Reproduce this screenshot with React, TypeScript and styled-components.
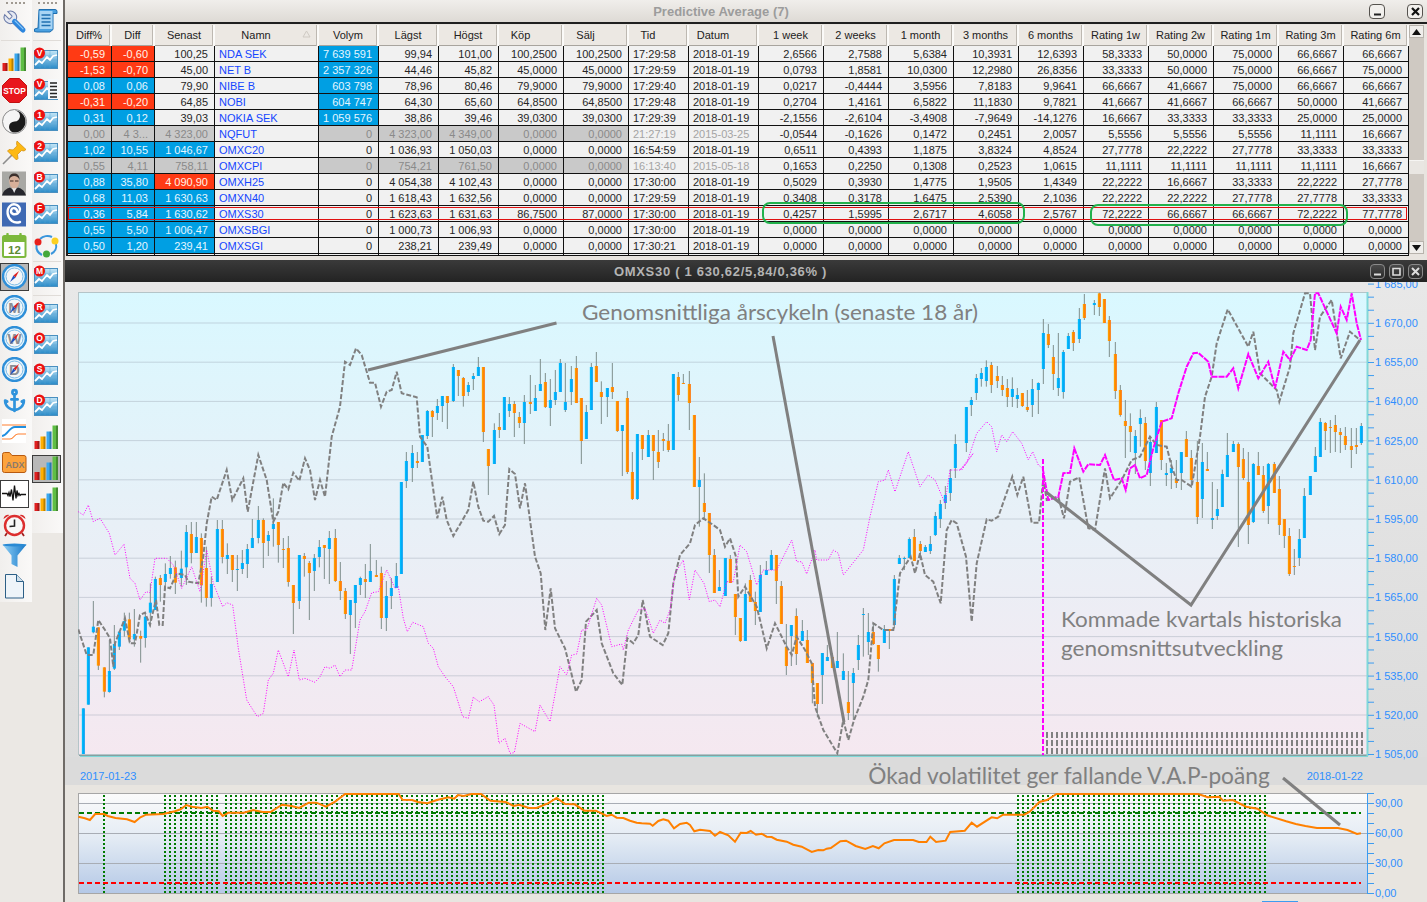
import type { ReactNode } from 'react';
import styled, { createGlobalStyle } from 'styled-components';
import { Anchor } from 'lucide-react';

const GlobalStyle = createGlobalStyle`
  html, body {
    margin: 0;
    padding: 0;
    height: 100%;
    overflow: hidden;
    background: #e8e4df;
    font-family: "Liberation Sans", Arial, sans-serif;
  }
`;

/* ---------- table data ---------- */

type Tone = 'red' | 'blue' | 'gray' | undefined;

interface Quote {
  name: string;
  pct: string;
  diff: string;
  last: string;
  lastTone?: Tone;
  vol: string;
  volTone?: Tone;
  low: string;
  high: string;
  bid: string;
  ask: string;
  time: string;
  date: string;
  stats: string[];
  dim?: boolean;
  selected?: boolean;
}

const DAY = '2018-01-19';
const ZEROS = Array(10).fill('0,0000');

const QUOTES: Quote[] = [
  { name: 'NDA SEK', pct: '-0,59', diff: '-0,60', last: '100,25', vol: '7 639 591', volTone: 'blue', low: '99,94', high: '101,00', bid: '100,2500', ask: '100,2500', time: '17:29:58', date: DAY, stats: ['2,6566', '2,7588', '5,6384', '10,3931', '12,6393', '58,3333', '50,0000', '75,0000', '66,6667', '66,6667'] },
  { name: 'NET B', pct: '-1,53', diff: '-0,70', last: '45,00', vol: '2 357 326', volTone: 'blue', low: '44,46', high: '45,82', bid: '45,0000', ask: '45,0000', time: '17:29:59', date: DAY, stats: ['0,0793', '1,8581', '10,0300', '12,2980', '26,8356', '33,3333', '50,0000', '75,0000', '66,6667', '75,0000'] },
  { name: 'NIBE B', pct: '0,08', diff: '0,06', last: '79,90', vol: '603 798', volTone: 'blue', low: '78,96', high: '80,46', bid: '79,9000', ask: '79,9000', time: '17:29:40', date: DAY, stats: ['0,0217', '-0,4444', '3,5956', '7,8183', '9,9641', '66,6667', '41,6667', '75,0000', '66,6667', '66,6667'] },
  { name: 'NOBI', pct: '-0,31', diff: '-0,20', last: '64,85', vol: '604 747', volTone: 'blue', low: '64,30', high: '65,60', bid: '64,8500', ask: '64,8500', time: '17:29:48', date: DAY, stats: ['0,2704', '1,4161', '6,5822', '11,1830', '9,7821', '41,6667', '41,6667', '66,6667', '50,0000', '41,6667'] },
  { name: 'NOKIA SEK', pct: '0,31', diff: '0,12', last: '39,03', vol: '1 059 576', volTone: 'blue', low: '38,86', high: '39,46', bid: '39,0300', ask: '39,0300', time: '17:29:39', date: DAY, stats: ['-2,1556', '-2,6104', '-3,4908', '-7,9649', '-14,1276', '16,6667', '33,3333', '33,3333', '25,0000', '25,0000'] },
  { name: 'NQFUT', pct: '0,00', diff: '4 3...', last: '4 323,00', vol: '0', low: '4 323,00', high: '4 349,00', bid: '0,0000', ask: '0,0000', time: '21:27:19', date: '2015-03-25', dim: true, stats: ['-0,0544', '-0,1626', '0,1472', '0,2451', '2,0057', '5,5556', '5,5556', '5,5556', '11,1111', '16,6667'] },
  { name: 'OMXC20', pct: '1,02', diff: '10,55', last: '1 046,67', lastTone: 'blue', vol: '0', low: '1 036,93', high: '1 050,03', bid: '0,0000', ask: '0,0000', time: '16:54:59', date: DAY, stats: ['0,6511', '0,4393', '1,1875', '3,8324', '4,8524', '27,7778', '22,2222', '27,7778', '33,3333', '33,3333'] },
  { name: 'OMXCPI', pct: '0,55', diff: '4,11', last: '758,11', vol: '0', low: '754,21', high: '761,50', bid: '0,0000', ask: '0,0000', time: '16:13:40', date: '2015-05-18', dim: true, stats: ['0,1653', '0,2250', '0,1308', '0,2523', '1,0615', '11,1111', '11,1111', '11,1111', '11,1111', '16,6667'] },
  { name: 'OMXH25', pct: '0,88', diff: '35,80', last: '4 090,90', lastTone: 'red', vol: '0', low: '4 054,38', high: '4 102,43', bid: '0,0000', ask: '0,0000', time: '17:30:00', date: DAY, stats: ['0,5029', '0,3930', '1,4775', '1,9505', '1,4349', '22,2222', '16,6667', '33,3333', '22,2222', '27,7778'] },
  { name: 'OMXN40', pct: '0,68', diff: '11,03', last: '1 630,63', lastTone: 'blue', vol: '0', low: '1 618,43', high: '1 632,56', bid: '0,0000', ask: '0,0000', time: '17:29:59', date: DAY, stats: ['0,3408', '0,3178', '1,6475', '2,5390', '2,1036', '22,2222', '22,2222', '27,7778', '27,7778', '33,3333'] },
  { name: 'OMXS30', pct: '0,36', diff: '5,84', last: '1 630,62', lastTone: 'blue', vol: '0', low: '1 623,63', high: '1 631,63', bid: '86,7500', ask: '87,0000', time: '17:30:00', date: DAY, selected: true, stats: ['0,4257', '1,5995', '2,6717', '4,6058', '2,5767', '72,2222', '66,6667', '66,6667', '72,2222', '77,7778'] },
  { name: 'OMXSBGI', pct: '0,55', diff: '5,50', last: '1 006,47', lastTone: 'blue', vol: '0', low: '1 000,73', high: '1 006,93', bid: '0,0000', ask: '0,0000', time: '17:30:00', date: DAY, stats: ZEROS },
  { name: 'OMXSGI', pct: '0,50', diff: '1,20', last: '239,41', lastTone: 'blue', vol: '0', low: '238,21', high: '239,49', bid: '0,0000', ask: '0,0000', time: '17:30:21', date: DAY, stats: ZEROS },
];

const HEADERS: [string, boolean][] = [
  ['Diff%', false], ['Diff', false], ['Senast', false], ['Namn', true], ['Volym', false], ['Lägst', false], ['Högst', false],
  ['Köp', true], ['Sälj', true], ['Tid', true], ['Datum', true], ['1 week', false], ['2 weeks', false], ['1 month', false],
  ['3 months', false], ['6 months', false], ['Rating 1w', false], ['Rating 2w', false], ['Rating 1m', false], ['Rating 3m', false], ['Rating 6m', false],
];

const COLUMNS = '44px 43px 60px 104px 60px 60px 60px 65px 65px 60px 70px repeat(10, 65px)';

/* ---------- page skeleton ---------- */

const Page = styled.div`
  display: flex;
  width: 1427px;
  height: 902px;
  overflow: hidden;
`;

const Sidebar = styled.aside`
  display: flex;
  align-items: flex-start;
  flex: 0 0 65px;
  box-sizing: border-box;
  height: 902px;
  background: #ebe8e4;
  border-right: 2px solid #6f6b67;
`;

const ToolColumn = styled.div<{ $height: number }>`
  position: relative;
  box-sizing: border-box;
  width: 31.5px;
  height: ${(p) => p.$height}px;
  padding-top: 6px;
  background: linear-gradient(90deg, #f1efed, #faf9f8);
  &::before {
    content: '';
    position: absolute;
    top: 2px;
    left: 6px;
    width: 19px;
    border-top: 2px dotted #a09a92;
  }
`;

const ToolButton = styled.div`
  display: flex;
  align-items: center;
  justify-content: center;
  width: 29px;
  height: 31px;
`;

const IconWell = styled.div<{ $active?: string }>`
  display: flex;
  align-items: center;
  justify-content: center;
  box-sizing: border-box;
  width: 29px;
  height: 28px;
  ${(p) => p.$active && `border: 1px solid #3c3c3c; background: ${p.$active};`}
`;

const ToolSep = styled.div<{ $gap: number }>`
  height: 1px;
  margin: ${(p) => p.$gap}px 2px ${(p) => p.$gap}px 1px;
  background: #e0dcd8;
`;

const Main = styled.main`
  display: flex;
  flex-direction: column;
  flex: 1;
  min-width: 0;
`;

const TitleBar = styled.header`
  display: flex;
  align-items: center;
  height: 22px;
  background: linear-gradient(#f0eeeb, #dedad5);
`;

const WindowTitle = styled.div<{ $dark?: boolean }>`
  flex: 1;
  padding: 1px 0 0 ${(p) => (p.$dark ? 6 : 8)}px;
  text-align: center;
  font-size: 13px;
  font-weight: bold;
  letter-spacing: ${(p) => (p.$dark ? 0.7 : 0)}px;
  color: ${(p) => (p.$dark ? '#b4b4b4' : '#9c9c9c')};
`;

const WindowControls = styled.div`
  display: flex;
  gap: 4px;
  padding-right: 4px;
`;

const LightButton = styled.div`
  display: flex;
  align-items: center;
  justify-content: center;
  box-sizing: border-box;
  width: 16px;
  height: 15px;
  margin-left: 18px;
  border: 1px solid #55524e;
  border-radius: 4px;
  background: #f2f0ed;
  &:first-child {
    margin-left: 0;
  }
`;

const DarkButton = styled.div`
  display: flex;
  align-items: center;
  justify-content: center;
  box-sizing: border-box;
  width: 15px;
  height: 15px;
  border: 1px solid #8a8a8a;
  border-radius: 4px;
  background: linear-gradient(#4a4a4a, #2a2a2a);
`;

const TableFrame = styled.section`
  display: flex;
  height: 231px;
  margin-left: 1px;
  padding-top: 1px;
  padding-right: 3px;
  background: #e8e4df;
  border-top: 2px solid #1f1f1f;
  border-left: 2px solid #1f1f1f;
`;

const Rows = styled.div`
  position: relative;
  width: 1341px;
`;

const HeaderRow = styled.div`
  display: grid;
  grid-template-columns: ${COLUMNS};
  height: 21px;
  box-sizing: border-box;
  background: #ece8e3;
  border-bottom: 1px solid #a8a49e;
`;

const HeaderCell = styled.div<{ $off?: boolean }>`
  position: relative;
  padding-right: ${(p) => (p.$off ? 20 : 0)}px;
  border-right: 2px solid #fbfaf8;
  box-shadow: inset -1px 0 0 #bdb8b1;
  text-align: center;
  font-size: 11px;
  line-height: 21px;
  color: #222;
`;

const SortMark = styled.svg`
  position: absolute;
  top: 5px;
  right: 6px;
`;

const DataRow = styled.div<{ $selected?: boolean }>`
  position: relative;
  display: grid;
  grid-template-columns: ${COLUMNS};
  height: 16px;
  ${(p) =>
    p.$selected &&
    `&::after {
      content: '';
      position: absolute;
      top: 1px;
      left: 0;
      right: 2px;
      bottom: 2px;
      border: 1px solid #e01010;
      pointer-events: none;
    }`}
`;

const StubRow = styled(DataRow)`
  height: 2px;
`;

const TONES = {
  red: ['#ff3a14', '#fff3e8'],
  blue: ['#009fe3', '#e4f6ff'],
  gray: ['#c9c9c9', '#8a8a8a'],
};

const Cell = styled.div<{ $tone?: Tone; $left?: boolean; $link?: boolean; $faint?: boolean }>`
  box-sizing: border-box;
  overflow: hidden;
  padding: 0 ${(p) => (p.$left ? 0 : 6)}px 0 ${(p) => (p.$left ? 4 : 0)}px;
  background: ${(p) => (p.$tone ? TONES[p.$tone][0] : '#f1f1f1')};
  border-right: 1px solid #111;
  border-bottom: 1px solid #111;
  text-align: ${(p) => (p.$left ? 'left' : 'right')};
  white-space: nowrap;
  font-size: 11px;
  line-height: 17px;
  color: ${(p) => {
    if (p.$tone) return TONES[p.$tone][1];
    if (p.$link) return '#1446ff';
    return p.$faint ? '#a4a4a4' : '#262626';
  }};
`;

const Ring = styled.div<{ $left: number; $top: number; $width: number }>`
  position: absolute;
  left: ${(p) => p.$left}px;
  top: ${(p) => p.$top}px;
  width: ${(p) => p.$width}px;
  height: 22px;
  box-sizing: border-box;
  border: 2px solid #22b14c;
  border-radius: 8px;
  pointer-events: none;
`;

const ScrollBar = styled.div`
  display: flex;
  flex-direction: column;
  width: 15px;
  height: 229px;
  background: #cfc9c2;
`;

const ScrollArrow = styled.div`
  display: flex;
  align-items: center;
  justify-content: center;
  box-sizing: border-box;
  height: 13px;
  background: #f0eeeb;
  border: 1px solid #b8b3ac;
`;

const ScrollThumb = styled.div`
  height: 13px;
  margin-top: 122px;
  margin-bottom: auto;
  background: #e9e6e2;
  border-top: 1px solid #f6f5f3;
`;

const TableFoot = styled.div`
  height: 4px;
  background: #e8e4df;
`;

const DarkBar = styled.header`
  display: flex;
  align-items: center;
  height: 22px;
  background: linear-gradient(#3a3a3a, #232323);
`;

const ChartBody = styled.div`
  display: flex;
  flex-direction: column;
  flex: 1;
`;

const PricePane = styled.div`
  position: relative;
  z-index: 1;
  height: 475px;
  background: linear-gradient(180deg, #e8e8e8, #dcdcdc);
  svg {
    display: block;
  }
`;

const DateRow = styled.div`
  display: flex;
  align-items: center;
  box-sizing: border-box;
  height: 28px;
  padding: 10px 64px 0 15px;
  background: #dbdbdb;
  font-size: 11px;
  color: #2f8fff;
`;

const Callout = styled.span`
  position: relative;
  z-index: 2;
  margin: -1px 37px 0 auto;
  font-family: Lato, "Liberation Sans", sans-serif;
  font-size: 22.7px;
  line-height: 22px;
  color: #808080;
`;

const VolumePane = styled.div`
  position: relative;
  height: 117px;
  background: #e8e5e0;
  svg {
    display: block;
    overflow: visible;
  }
`;

const Note = styled.text`
  font-family: Lato, "Liberation Sans", sans-serif;
  font-size: 22px;
  fill: #808080;
`;

const AxisLabel = styled.text`
  font-family: "Liberation Sans", Arial, sans-serif;
  font-size: 11px;
  fill: #2f8fff;
`;

/* ---------- chart traces, in page pixels x3 relative to an offset ---------- */

const trace = (pts: number[], ox: number, oy: number, sx = 3, sy = 3) => {
  const out: string[] = [];
  for (let i = 0; i < pts.length; i += 2) {
    out.push(`${(ox + pts[i] / sx).toFixed(1)},${(oy + pts[i + 1] / sy).toFixed(1)}`);
  }
  return out;
};

const poly = (...parts: string[][]) => 'M' + parts.flat().join(' L');

const GRAY_A = [25,1018,50,1095,70,1095,85,990,105,1020,120,1045,130,1130,135,1060,165,985,180,1060,195,1060,210,975,225,968,240,1005,248,970,258,930,268,1005,278,1005,285,890,300,895,320,850,345,855,355,875,385,880,400,800,410,700,425,620,440,630,470,540,487,630,520,565,533,665,565,495,590,570,610,695,625,665,640,578,655,598,670,548,688,572,705,505,720,540,735,630,750,570,765,620,785,440,810,350,825,215,840,225,858,175,875,195,900,278,915,278,933,350,950,305,965,300,980,245,995,310,1040,322,1050,440,1072,470,1090,600,1102,685,1117,620,1130,690,1150,738,1195,660,1210,575,1225,650,1240,692,1255,695,1272,678,1288,732,1305,705];
const GRAY_B = [15,700,28,537,45,552,60,655,75,580,105,800,122,850,136,1020,152,895,165,1015,195,1075,228,1205,245,1170,258,995,290,960,305,1060,340,1150,367,1185,382,1045,400,1060,415,1035,428,930,450,1040,488,1065,505,1030,520,880,540,795,570,760,585,705,610,685,640,705,660,720,675,770,690,745,708,800,715,920,735,890,770,950,780,990,800,1075,825,1000,860,1070,875,1095,890,1040,915,1080,935,1120,945,1250,970,1320,1012,1390,1030,1290,1045,1350,1062,1290,1090,1220,1105,1170,1120,1000,1150,1020,1180,1020,1200,850,1232,800,1245,850,1260,790,1275,855,1300,875,1322,940,1340,720,1355,690,1370,700,1398,800,1415,995];
const GRAY_C = [35,1025,50,850,80,718,95,722,115,710,157,590,172,645,190,590,215,728,237,728,250,595,260,660,295,650,312,715,330,605,358,592,385,745,405,750,435,565,450,655,485,600,515,540,540,530,570,470,590,495,620,500,635,560,650,600,665,600,695,620,720,470,735,350,755,290,770,190,803,88,865,200,880,155,900,280,950,330,958,365,990,260,1000,160,1035,40,1050,40,1065,210,1080,110,1115,60,1142,235,1170,155,1200,180];

const PINK_A = [25,665,40,675,55,645,70,695,90,685,118,730,135,795,162,763,180,865,195,880,210,930,228,905,240,908,255,805,290,805,310,825,335,895,365,830,390,905,410,780,430,880,458,950,470,938,488,945,505,1075,530,1230,562,1280,580,1270,595,1170,610,1150,625,1080,655,1160,672,1080,688,1170,705,1165,735,1177,750,1160,765,1130,780,1135,795,1125,810,1160,825,1140,845,1140,870,990,885,965,905,908,925,905,950,840,975,895,985,890,1000,985,1012,1025,1028,997,1060,1010,1075,1060,1090,1075,1105,1130,1125,1160,1150,1190,1178,1280,1195,1285,1210,1222,1228,1235,1255,1220,1272,1245,1287,1360];
const PINK_B = [15,1345,30,1390,43,1388,60,1300,105,1325,120,1245,150,1295,180,1130,200,1155,215,1095,230,1092,245,1020,260,1020,290,925,305,945,335,1070,365,1062,370,1080,385,1020,415,960,435,955,460,1030,480,990,495,1000,510,960,525,850,550,810,568,930,585,840,612,880,628,935,645,930,660,950,680,875,700,875,720,765,740,785,770,885,790,840,830,840,875,750,890,815,905,815,920,852,945,780,950,810,985,810,1000,780,1015,790,1030,855,1090,780,1110,680,1135,575,1155,570,1165,540,1185,605,1225,485,1260,590,1285,555,1305,570,1335,640,1350,540,1385,540,1420,490];
const PINK_C = [0,570,20,550,50,460,80,425,95,440,110,515,125,465,140,485,158,455,185,490,205,540,218,515,235,555,248,565];
const PINK_FUTURE = [248,565,265,660,295,650,310,580,330,578,343,505,370,575,385,553,420,555,435,525,462,600,485,595,497,630,510,565,525,555,540,595,560,585,580,505,605,425,635,415,655,340,680,260,700,220,715,218,745,245,755,290,800,290,820,265,835,325,865,222,895,295,925,245,945,325,970,215,990,240,1010,200,1040,210,1052,180,1065,40,1075,40,1130,160,1142,80,1160,120,1175,40,1190,130,1203,180];

const VAP_A = [48,230,65,235,78,240,92,222,115,222,125,228,145,234,175,238,195,246,210,232,225,224,270,222,300,214,315,208,330,195,345,200,370,204,385,200,400,212,415,214,425,228,440,218,480,218,505,210,530,216,550,216,580,194,605,198,625,204,650,188,670,188,695,200,720,184,745,162,885,162,895,179,920,180,935,186,960,190,985,180,1015,172,1030,176,1040,165,1055,168,1075,162,1100,162,1125,182,1165,186,1185,198,1200,194,1225,204,1245,204,1275,190,1298,174,1320,192,1345,193,1370,212,1400,212];
const VAP_B = [0,68,20,78,35,74,50,83,70,84,90,92,110,98,125,100,150,101,158,107,175,93,190,88,205,92,222,115,240,102,260,98,270,105,283,124,300,119,330,123,345,137,360,126,385,136,405,155,422,128,440,129,452,123,468,134,485,131,500,140,515,141,530,149,560,155,580,164,605,170,635,186,655,180,670,181,680,176];
const VAP_C = [10,324,35,304,50,302,75,318,100,327,120,318,135,325,150,310,175,300,225,300,240,306,260,306,270,290,285,306,310,302,322,276,360,272,378,248,392,260,430,232,445,235,460,224,515,224,530,215,555,186,575,180,600,162,970,162,995,172,1025,170,1035,182,1060,180,1095,200,1125,206,1150,226,1200,244,1225,252,1250,258,1280,264,1335,264,1360,270,1385,282,1395,280];

const B = 0;
const O = 1;
type Candle = [number, number, number, number, number?, number?];

const CANDLES_A: Candle[] = [
  [B,40,1255,1392],[B,55,1072,1244],[B,70,1010,1027,933,1030],[O,85,1012,1127,0,1140],[O,103,1132,1205,0,1222],[B,118,1143,1206,1050,1208],[B,133,1062,1136,1005,1140],[B,148,1025,1070,0,1080],[B,163,993,1022,968,1040],[O,178,988,1048,968,1060],[B,193,1032,1048,957,1070],[O,212,1038,1046,1022,1118],[B,226,980,1044,970,1073],[B,241,938,968,880,1010],[B,256,867,960,860],[O,271,864,885,855,935],[B,286,852,876,820,900],[B,301,834,852,798,866],[O,316,832,878,812,912],[B,334,836,864,782,890],[B,349,726,832,705,885],[O,364,732,789,696,820],[B,379,741,789,696],[O,394,744,886,730,938],[O,409,834,924,770,950],[B,424,882,924,860,950],[B,442,717,876,690],[O,457,717,801,690,820],[B,472,795,807,760,852],[O,487,795,840,0,876],[B,502,837,840,795,903],[B,517,819,837,780,852],[B,532,777,822,762,864],[B,547,744,774,687],[B,565,690,744,648,760],[O,580,690,759,685,834],[B,595,735,753,723,798],[B,610,702,717,625,770],[O,625,696,765,696,818],[O,640,777,780,744,834],[O,655,774,876,738,890],[O,670,885,939,0,1032],[B,688,795,933,0,957],[O,703,798,807,789,860],[O,718,819,849,813,990],[B,733,804,843,792,903],[B,748,771,801,750,832],[O,763,765,774,765,867],[B,778,744,777,723,882],[O,796,744,873,717,876],[O,811,873,903,816,930],[O,826,903,972,894,987],[B,841,930,975,0,1092],[B,856,885,939,885,1014],[B,871,864,885,860,915],[O,886,867,876,822,924],[B,901,843,876,762,876],[O,919,855,861,810],[O,934,849,984,830,1017],[B,949,918,984,873,1023],[B,964,894,918,864,957],[B,979,858,894,819],[B,994,576,852],[B,1009,513,573,486,594],[B,1027,489,534,465,576],[O,1042,513,519,486,534],[B,1057,435,516],[B,1072,363,438,360,447],[O,1087,363,381,360,441],[B,1102,348,369,327,390],[B,1117,318,348,318,396],[O,1132,318,339,318,417],[B,1150,231,333,222,336],[O,1165,240,258,240,318],[O,1180,264,318,261,350],[B,1195,285,306,276,318],[B,1210,258,267,249,300],[B,1225,231,258,201],[O,1240,231,426,0,456],[O,1255,477,528,0,615],[B,1273,420,522,400,522],[O,1288,411,420,369,444],
];

const CANDLES_B: Candle[] = [
  [B,13,321,420],[B,28,342,363,321,381],[O,43,342,369,333,441],[O,58,381,399,366,414],[B,73,336,399,315,462],[O,91,336,342,255,372],[B,106,324,363,285,363],[B,121,282,303,207],[O,136,276,351,249,354],[B,151,330,354,267,408],[B,166,306,330,240,345],[B,181,219,306,207],[B,196,336,360,219,366],[B,214,267,306,228,345],[O,229,234,339,198],[O,244,324,453,0,522],[B,259,366,447,345],[B,274,231,360,219],[O,289,228,276,186],[O,304,306,321,274,402],[B,322,294,321,294,381],[O,337,291,306,219,327],[O,352,333,423,0,426],[B,367,405,423,0,558],[O,382,324,546,303,552],[O,397,546,627,486,630],[B,412,432,627,432,630],[O,427,435,477,435,510],[B,445,435,501,420],[O,460,435,483,435,570],[O,475,486,516,420,534],[O,490,447,453,429,483],[O,505,453,480,402,486],[B,520,252,480],[O,535,261,315,246,333],[O,550,279,282,252],[O,568,282,339,243,420],[O,583,375,591],[B,598,570,591,501,710],[O,613,639,666,550,690],[O,628,669,795,0,849],[O,643,795,909,777],[B,658,891,903,840],[B,676,804,918],[O,691,807,879,795],[O,706,912,981,0,1035],[O,721,984,1053,0,1056],[B,736,912,1053,880],[O,751,870,936,855],[O,766,936,963,905,1005],[B,781,855,966,825],[B,799,840,855,813],[B,814,795,840,780],[O,829,795,873,0,942],[O,844,888,1002,873],[O,859,1071,1128,1002,1155],[B,874,1005,1038,0,1128],[O,889,978,1092,955,1125],[B,907,1023,1053,990],[O,922,1050,1119,1020],[O,937,1119,1179,0,1240],[O,952,1179,1242,0,1282],[B,967,1089,1155,0,1242],[B,982,1101,1113,1065],[O,997,1101,1134,1089],[B,1012,1113,1134,1026],[B,1030,1143,1170,1090],[O,1045,1236,1269,1143,1290],[B,1060,1149,1179,1134,1290],[B,1075,1065,1110,1035,1140],[B,1090,972,975,954,1100],[B,1105,1026,1056,969,1095],[O,1120,1026,1062,1000,1065],[O,1135,1065,1107,0,1145],[B,1153,1017,1059,1005],[O,1168,1017,1023,0,1077],[B,1183,867,1005,855,1015],[B,1198,804,822,795],[B,1213,804,807,800,840],[B,1228,747,804,742],[O,1243,741,813,717],[O,1261,762,783,753,810],[B,1276,771,786,765],[B,1291,762,783,738,792],[B,1306,678,735,666,738],[B,1321,642,687,630,714],[B,1336,615,639,588,657],[B,1351,564,609,537,633],[B,1366,462,534,433,564],[B,1399,351,459,351,486],[B,1414,330,345,321,378],
];

const CANDLES_C: Candle[] = [
  [B,49,294,339,282,360],[B,64,279,297,264,320],[B,79,261,303,241,320],[O,94,255,315,246,339],[O,112,288,303,258,324],[O,127,315,330,288,348],[O,142,324,351,297,381],[B,157,327,351,292,381],[B,172,345,357,324,384],[O,187,339,378,339,381],[O,202,381,390,330,396],[B,217,327,375,297,411],[B,235,309,330,307,402],[B,250,159,267,117,312],[O,265,162,195,132,204],[O,280,231,282,195,330],[B,295,294,324,159,348],[B,310,216,336,210,356],[B,325,168,207,159],[O,340,156,189,150,213],[B,358,117,177,84,189],[O,373,72,114,42,120],[B,403,69,75,60,105],[O,418,40,81,38,108],[O,433,57,129],[O,448,120,183,108,231],[O,466,222,333,186,357],[O,481,330,405,315,410],[O,496,423,438,360,534],[O,511,438,456,400,516],[B,526,468,519,450,582],[B,541,414,432,388,500],[O,556,429,543,411,570],[B,571,486,579,470,618],[B,589,381,519,366],[O,604,420,540,420,570],[B,619,579,585,549,618],[B,634,564,579,540,627],[O,649,597,609,540,624],[B,664,516,579,516,630],[O,679,477,531,453],[O,694,534,600,510,624],[O,712,606,711,483,732],[B,727,546,657,489,714],[O,742,567,573,516],[B,757,714,720,606,747],[B,772,687,708,627,720],[B,787,582,681,569],[B,802,525,591,459],[B,820,492,516,483],[O,835,492,561,487,801],[O,850,537,594,504,600],[O,865,606,735,516,792],[B,880,552,726,549,729],[O,895,558,585,516],[O,910,585,693,558,699],[B,925,552,678,549,732],[O,943,552,639,546],[O,958,627,735,588,765],[O,973,717,768,0,804],[O,988,768,882,744,888],[O,1003,858,861,807,885],[B,1018,777,834,747,858],[B,1033,648,774,624],[B,1051,588,645],[B,1066,528,576,501],[B,1081,426,531,414],[O,1096,429,453,426,510],[O,1111,441,444,420,519],[O,1126,435,456,405,516],[O,1141,456,465,444,519],[O,1156,468,495,441,510],[O,1174,498,510,444,564],[O,1189,495,501,444,522],[B,1204,438,489,429,495],
];

const CANDLES = [
  ...CANDLES_A.map((c) => [c, 70, 290] as const),
  ...CANDLES_B.map((c) => [c, 500, 290] as const),
  ...CANDLES_C.map((c) => [c, 960, 280] as const),
];

const PRICE_LABELS = ['1 670,00', '1 655,00', '1 640,00', '1 625,00', '1 610,00', '1 595,00', '1 580,00', '1 565,00', '1 550,00', '1 535,00', '1 520,00', '1 505,00'];

const PriceChart = () => {
  const step = 39.2;
  const grid = Array.from({ length: 11 }, (_, i) => 323 + i * step);
  const ticks = Array.from({ length: 37 }, (_, i) => 754.5 - (i * step) / 3);
  return (
    <svg width={1362} height={479} viewBox="65 282 1362 479">
      <defs>
        <linearGradient id="plotBg" x1="0" y1="0" x2="0" y2="1">
          <stop offset="0" stopColor="#d9f8ff" />
          <stop offset="0.5" stopColor="#e8f0f7" />
          <stop offset="1" stopColor="#f5e8f0" />
        </linearGradient>
        <linearGradient id="bodyBlue" x1="0" y1="0" x2="1" y2="0">
          <stop offset="0" stopColor="#00c4ff" />
          <stop offset="1" stopColor="#0098f0" />
        </linearGradient>
        <linearGradient id="bodyOrange" x1="0" y1="0" x2="1" y2="0">
          <stop offset="0" stopColor="#ffa800" />
          <stop offset="1" stopColor="#ff6c00" />
        </linearGradient>
        <clipPath id="plotClip">
          <rect x={78} y={292} width={1289} height={463} />
        </clipPath>
      </defs>

      <rect x={78.5} y={292.5} width={1289} height={462} fill="url(#plotBg)" stroke="#b4c4c8" />
      {grid.map((y) => (
        <line key={y} x1={79} x2={1367} y1={y} y2={y} stroke="#9aa4b0" strokeOpacity={0.42} strokeWidth={1} />
      ))}

      <g clipPath="url(#plotClip)">
        {CANDLES.map(([[tone, x, top, bot, wt, wb], ox, oy]) => {
          const cx = ox + x / 3;
          const y1 = oy + top / 3;
          const y2 = oy + bot / 3;
          return (
            <g key={`${ox}-${x}`}>
              <line x1={cx} x2={cx} y1={oy + (wt || top) / 3} y2={oy + (wb || bot) / 3} stroke="#7f8f8c" strokeWidth={1} />
              <rect x={cx - 1.5} y={y1} width={3} height={Math.max(y2 - y1, 1)} fill={tone === B ? 'url(#bodyBlue)' : 'url(#bodyOrange)'} />
            </g>
          );
        })}

        <path
          d={poly(trace(GRAY_A, 70, 290), trace(GRAY_B, 500, 290), trace(GRAY_C, 960, 280))}
          fill="none"
          stroke="#808080"
          strokeWidth={2}
          strokeDasharray="5 2"
        />
        <path
          d={poly(trace(PINK_A, 70, 290), trace(PINK_B, 500, 290), trace(PINK_C, 960, 280))}
          fill="none"
          stroke="#ff00ff"
          strokeWidth={1}
          strokeDasharray="1 1.6"
        />
        <path d={poly(trace(PINK_FUTURE, 960, 280))} fill="none" stroke="#ff00ff" strokeWidth={2} strokeDasharray="6 1" />
        <line x1={1043} x2={1043} y1={459} y2={755} stroke="#ff00ff" strokeWidth={2} strokeDasharray="5 2" />

        {[732, 740, 748].map((y) =>
          Array.from({ length: 64 }, (_, i) => (
            <rect key={`${y}-${i}`} x={1046 + i * 5} y={y} width={2} height={6} fill="#808080" />
          )),
        )}
      </g>

      <g stroke="#808080" strokeWidth={3} fill="none">
        <path d="M368 370 L556.5 323" />
        <path d="M773 336 L844 722" />
        <path d="M1046 492 L1191 605 L1360 340" />
      </g>

      <Note x={582} y={320} textLength={396} lengthAdjust="spacingAndGlyphs">Genomsnittliga årscykeln (senaste 18 år)</Note>
      <Note x={1061} y={627} textLength={281} lengthAdjust="spacingAndGlyphs">Kommade kvartals historiska</Note>
      <Note x={1061} y={656} textLength={222} lengthAdjust="spacingAndGlyphs">genomsnittsutveckling</Note>

      <line x1={79} x2={1367} y1={755.5} y2={755.5} stroke="#86a0a0" />
      <line x1={80} x2={1368} y1={756.5} y2={756.5} stroke="#80d8d8" />
      <line x1={1367.5} x2={1367.5} y1={292} y2={756} stroke="#80d8d8" strokeWidth={2} />
      {ticks.map((y) => (
        <line key={y} x1={1368} x2={1374} y1={y} y2={y} stroke="#3d9cf0" />
      ))}
      <AxisLabel x={1375} y={288}>1 685,00</AxisLabel>
      {PRICE_LABELS.map((text, i) => (
        <AxisLabel key={text} x={1375} y={327 + i * step}>{text}</AxisLabel>
      ))}
    </svg>
  );
};

const DOT_RUNS: [number, number][] = [[104, 104], [165, 217], [226, 603], [1018, 1265]];

const VolumeChart = () => {
  const dots = DOT_RUNS.flatMap(([from, to]) => {
    const n = Math.round((to - from) / 5.02);
    return Array.from({ length: n + 1 }, (_, i) => (n ? from + (i * (to - from)) / n : from));
  });
  const ticks = Array.from({ length: 11 }, (_, i) => 793.5 + i * 10);
  return (
    <svg width={1362} height={117} viewBox="65 785 1362 117">
      <defs>
        <linearGradient id="volBg" x1="0" y1="0" x2="0" y2="1">
          <stop offset="0" stopColor="#fbfbfb" />
          <stop offset="0.45" stopColor="#e3ebf4" />
          <stop offset="1" stopColor="#b4c8e6" />
        </linearGradient>
      </defs>
      <rect x={78.5} y={793.5} width={1289} height={100} fill="url(#volBg)" stroke="#a6a6a6" />
      {[803.5, 833.5, 863.5].map((y) => (
        <line key={y} x1={79} x2={1367} y1={y} y2={y} stroke="#a8adb5" />
      ))}
      <path
        d={dots.map((x) => `M${Math.round(x)} 795 V893`).join(' ')}
        stroke="#007a00"
        strokeWidth={2}
        strokeDasharray="2 2"
        shapeRendering="crispEdges"
      />
      <line x1={79} x2={1361} y1={813} y2={813} stroke="#007a00" strokeWidth={2} strokeDasharray="5 3" shapeRendering="crispEdges" />
      <line x1={79} x2={1361} y1={883} y2={883} stroke="#ff0000" strokeWidth={2} strokeDasharray="5 3" shapeRendering="crispEdges" />
      <path
        d={poly(trace(VAP_A, 60, 740, 2.613, 3), trace(VAP_B, 600, 790), trace(VAP_C, 827, 740, 2.613, 3))}
        fill="none"
        stroke="#ff8000"
        strokeWidth={2}
      />
      <line x1={1283} y1={778} x2={1340} y2={825} stroke="#808080" strokeWidth={3} />
      <line x1={1367.5} x2={1367.5} y1={793} y2={894} stroke="#3d9cf0" />
      {ticks.map((y) => (
        <line key={y} x1={1368} x2={1374} y1={y} y2={y} stroke="#3d9cf0" />
      ))}
      <AxisLabel x={1375} y={807}>90,00</AxisLabel>
      <AxisLabel x={1375} y={837}>60,00</AxisLabel>
      <AxisLabel x={1375} y={867}>30,00</AxisLabel>
      <AxisLabel x={1375} y={897}>0,00</AxisLabel>
      <line x1={1262} x2={1298} y1={901.5} y2={901.5} stroke="#3d9cf0" />
    </svg>
  );
};

/* ---------- tool icons ---------- */

const Ico = ({ children }: { children: ReactNode }) => (
  <svg width={25} height={25} viewBox="0 0 25 25">{children}</svg>
);

const BadgeChart = ({ badge, list }: { badge: string; list?: boolean }) => (
  <Ico>
    <defs>
      <linearGradient id="miniChart" x1="0" y1="0" x2="0" y2="1">
        <stop offset="0" stopColor="#c4e6f7" />
        <stop offset="1" stopColor="#2a8bc8" />
      </linearGradient>
    </defs>
    <rect x={0.5} y={3.5} width={23} height={18} fill="url(#miniChart)" stroke="#4a90c0" />
    <path d="M1 9h22M1 13h22M1 17h22M6 4v17M11 4v17M16 4v17" stroke="#5aa6d6" strokeOpacity={0.6} strokeWidth={0.7} />
    <path d="M1 18l4-4 3 2 5-6 3 3 3-4 4-1" fill="none" stroke="#fff" strokeWidth={1.8} />
    {list && (
      <>
        <rect x={14} y={1} width={10} height={20} fill="#f6f8fa" />
        <path d="M16 5h7M16 8.5h7M16 12h7M16 15.5h7M16 19h7" stroke="#222" strokeWidth={1.3} />
      </>
    )}
    <circle cx={5.5} cy={6} r={5.5} fill="#ee1010" />
    <text x={5.5} y={9} textAnchor="middle" fontFamily="Liberation Sans" fontWeight="bold" fontSize={8.5} fill="#fff">{badge}</text>
  </Ico>
);

const Bars = () => (
  <Ico>
    <rect x={0.5} y={16} width={5} height={8} fill="#e02020" />
    <rect x={6.5} y={11.5} width={5} height={12.5} fill="#ffb000" />
    <rect x={12.5} y={6.5} width={5} height={17.5} fill="#3aa8f0" />
    <rect x={18.5} y={0.5} width={5.5} height={23.5} fill="#5fbe45" />
    <path d="M4.5 16v8M10.5 11.5V24M16.5 6.5V24M23 .5V24" stroke="#000" strokeOpacity={0.28} strokeWidth={2} />
  </Ico>
);

const Compass = ({ letter }: { letter?: string }) => (
  <Ico>
    <circle cx={12.5} cy={12.5} r={11.5} fill="#e8f4fb" stroke="#2f8fd8" strokeWidth={2.4} />
    <circle cx={12.5} cy={12.5} r={8.5} fill="#f4f6f8" stroke="#7bbbe6" />
    {letter && (
      <text x={12.5} y={18} textAnchor="middle" fontFamily="Liberation Sans" fontWeight="bold" fontSize={15} fill="#8a8f96">{letter}</text>
    )}
    <path d="M17 7l-3.4 6.6-2.2-2.2z" fill="#e02020" />
    <path d="M8 18l3.4-6.6 2.2 2.2z" fill="#2050c0" />
  </Ico>
);

const Wrench = () => (
  <Ico>
    <g transform="translate(25 0) scale(-1.04 1.04)">
      <path
        d="M14.7 6.3a1 1 0 0 0 0 1.4l1.6 1.6a1 1 0 0 0 1.4 0l3.77-3.77a6 6 0 0 1-7.94 7.94l-6.91 6.91a2.12 2.12 0 0 1-3-3l6.91-6.91a6 6 0 0 1 7.94-7.94l-3.76 3.76z"
        fill="#e4e8f2"
        stroke="#6a7aa8"
        strokeWidth={1}
      />
    </g>
    <path d="M12.5 12.5l8.5 8.5" stroke="#2c86de" strokeWidth={5} strokeLinecap="round" />
    <path d="M13 11.8l8 8" stroke="#8cc8f6" strokeWidth={1.2} strokeLinecap="round" />
  </Ico>
);

const Stop = () => (
  <Ico>
    <path d="M7.5 .5h10l7 7v10l-7 7h-10l-7-7v-10z" fill="#e8161c" stroke="#c01010" />
    <text x={12.5} y={15.5} textAnchor="middle" fontFamily="Liberation Sans" fontWeight="bold" fontSize={8.3} fill="#fff">STOP</text>
  </Ico>
);

const YinYang = () => (
  <Ico>
    <circle cx={12.5} cy={12.5} r={12} fill="#f5f5f5" stroke="#8a8a8a" />
    <path d="M12.5 1.5a11 11 0 0 1 0 22a5.5 5.5 0 0 1 0-11a5.5 5.5 0 0 0 0-11z" fill="#1a1a1a" />
    <circle cx={12.5} cy={7} r={1.8} fill="#f5f5f5" />
    <circle cx={12.5} cy={18} r={1.8} fill="#1a1a1a" />
  </Ico>
);

const Pin = () => (
  <Ico>
    <path d="M10.5 14.5L1 24" stroke="#8c8c8c" strokeWidth={1.6} />
    <path d="M15 1l9 8.5-2 1.5-2.5-.5-4 4 .5 4-1.5 1.5L5.5 11 7 9.5l4 .4 4-4-.5-2.4z" fill="#fdb913" stroke="#d08a08" strokeWidth={0.7} />
  </Ico>
);

const Portrait = () => (
  <Ico>
    <rect x={0} y={0.5} width={24} height={24} fill="#a8a8a4" />
    <path d="M0 24.5c2-6 5-7 8-8l4 3 4-3c3 1 6 2 8 8z" fill="#26262c" />
    <path d="M10 17l2.2 5 2.2-5z" fill="#e8e8ea" />
    <ellipse cx={12.2} cy={10.5} rx={5} ry={7} fill="#d8b09a" />
    <path d="M7 9c0-5 2-6.5 5.2-6.5S17.5 4 17.5 9c-1-3-3-4-5.3-4S8 6 7 9z" fill="#3c302c" />
    <path d="M8 10h3.5M13 10h3.5" stroke="#3a2a24" strokeWidth={1} />
  </Ico>
);

const Swirl = () => (
  <Ico>
    <rect x={0} y={0.5} width={24} height={24} fill="#3f69b3" />
    <path d="M15 9a3 3 0 1 0-4 3c3 1 7-1 7-5a6 6 0 0 0-10-3c-4 4-3 11 2 15 2 1.5 5 2 8 1" fill="none" stroke="#fff" strokeWidth={2.4} strokeLinecap="round" />
  </Ico>
);

const Calendar = () => (
  <Ico>
    <rect x={1} y={3} width={22.5} height={21} rx={1.5} fill="#fff" stroke="#7cb83c" strokeWidth={2} />
    <rect x={1} y={3} width={22.5} height={6} fill="#7cb83c" />
    <path d="M5.5 1v5M18.5 1v5" stroke="#7cb83c" strokeWidth={2.4} strokeLinecap="round" />
    <text x={12.5} y={21} textAnchor="middle" fontFamily="Liberation Sans" fontWeight="bold" fontSize={11.5} fill="#5c8a34">12</text>
  </Ico>
);

const LinesIcon = () => (
  <Ico>
    <rect x={0} y={0} width={24} height={24} fill="#fff" />
    <path d="M0 6h24M0 20h8c4 0 4-5 8-5h8" fill="none" stroke="#ff8030" strokeWidth={1.2} />
    <path d="M0 17c6-1 7-9 13-9h11" fill="none" stroke="#1f8fe0" strokeWidth={1.8} />
  </Ico>
);

const AdxFolder = () => (
  <Ico>
    <path d="M.5 4.5a2 2 0 0 1 2-2h5l2.5 3h12a2 2 0 0 1 2 2v13a2 2 0 0 1-2 2h-19.5a2 2 0 0 1-2-2z" fill="#fda33c" stroke="#b85a10" />
    <text x={13} y={18} textAnchor="middle" fontFamily="Liberation Sans" fontWeight="bold" fontSize={9} fill="#8a7a6c">ADX</text>
  </Ico>
);

const Wave = () => (
  <Ico>
    <path d="M0 12.5h5l1 2 1-3 1 4 1.5-7 1.5 11 1.5-15 1.5 13 1-8 1 5 1-2 1 2 1-1h5" fill="none" stroke="#111" strokeWidth={1.3} />
  </Ico>
);

const AlarmClock = () => (
  <Ico>
    <path d="M1.5 7a4.5 4.5 0 0 1 6-4zM23.5 7a4.5 4.5 0 0 0-6-4z" fill="#d82a2a" />
    <path d="M5 21l-2 3M20 21l2 3" stroke="#a02020" strokeWidth={1.8} />
    <circle cx={12.5} cy={13.5} r={9.5} fill="#f8f8f8" stroke="#dc2e2e" strokeWidth={2.4} />
    <path d="M12.5 7.5v6.5l-5 .5" fill="none" stroke="#222" strokeWidth={1.6} />
  </Ico>
);

const Funnel = () => (
  <Ico>
    <defs>
      <linearGradient id="funnelFill" x1="0" y1="0" x2="1" y2="0">
        <stop offset="0" stopColor="#8fd0f6" />
        <stop offset="1" stopColor="#1878c8" />
      </linearGradient>
    </defs>
    <path d="M.5 1.5h24l-9 11v11.5l-6-3v-8.5z" fill="url(#funnelFill)" />
    <ellipse cx={12.5} cy={2} rx={12} ry={1.5} fill="#2a8ad4" />
  </Ico>
);

const PageIcon = () => (
  <Ico>
    <path d="M3.5 .5h11l7 7v16.5h-18z" fill="#eef4f9" stroke="#2c5f86" />
    <path d="M14.5 .5v7h7" fill="#d0dfea" stroke="#2c5f86" />
  </Ico>
);

const ScrollIcon = () => (
  <Ico>
    <path d="M5 .5h16a2 2 0 0 1 2 2v2h-4v16l-3 2.5H3l-2.5-.5v-2.5l3.5-1z" fill="#4aa0e0" stroke="#1f6fb0" strokeWidth={1} />
    <rect x={5.5} y={2} width={13} height={18} fill="#a8d4f4" />
    <path d="M7.5 6h9M7.5 9.5h9M7.5 13h9M7.5 16.5h9" stroke="#1f6fb0" strokeWidth={1.3} />
  </Ico>
);

const Cycle = () => (
  <Ico>
    <path d="M6 6c3-3 8-4 12-2M22 11c1 4-1 8-5 10M8 22c-4-2-6-6-5.5-10" fill="none" stroke="#3a96dc" strokeWidth={2} />
    <circle cx={4} cy={9} r={3.5} fill="#e8201c" />
    <circle cx={21} cy={8} r={3.5} fill="#fcd020" />
    <circle cx={12.5} cy={21} r={3.5} fill="#45a83a" />
  </Ico>
);

interface Tool {
  icon: ReactNode;
  active?: string;
  sep?: number;
}

const LEFT_TOOLS: Tool[] = [
  { icon: <Wrench />, sep: 3 },
  { icon: <Bars /> },
  { icon: <Stop /> },
  { icon: <YinYang /> },
  { icon: <Pin /> },
  { icon: <Portrait /> },
  { icon: <Swirl /> },
  { icon: <Calendar /> },
  { icon: <Compass />, active: '#b8b8b8' },
  { icon: <Compass letter="M" /> },
  { icon: <Compass letter="W" /> },
  { icon: <Compass letter="D" /> },
  { icon: <Anchor size={25} color="#2f93dc" strokeWidth={2.6} /> },
  { icon: <LinesIcon /> },
  { icon: <AdxFolder /> },
  { icon: <Wave />, active: '#ffffff' },
  { icon: <AlarmClock /> },
  { icon: <Funnel /> },
  { icon: <PageIcon /> },
];

const RIGHT_TOOLS: Tool[] = [
  { icon: <ScrollIcon />, sep: 3 },
  { icon: <BadgeChart badge="V" /> },
  { icon: <BadgeChart badge="V" list /> },
  { icon: <BadgeChart badge="1" /> },
  { icon: <BadgeChart badge="2" /> },
  { icon: <BadgeChart badge="B" /> },
  { icon: <BadgeChart badge="F" /> },
  { icon: <Cycle />, sep: 0 },
  { icon: <BadgeChart badge="M" />, sep: 2 },
  { icon: <BadgeChart badge="R" /> },
  { icon: <BadgeChart badge="O" /> },
  { icon: <BadgeChart badge="S" /> },
  { icon: <BadgeChart badge="D" /> },
  { icon: <Bars /> },
  { icon: <Bars />, active: '#b8b8b8' },
  { icon: <Bars /> },
];

const ToolList = ({ tools, height }: { tools: Tool[]; height: number }) => (
  <ToolColumn $height={height}>
    {tools.map((tool, i) => (
      <div key={i}>
        <ToolButton>
          <IconWell $active={tool.active}>{tool.icon}</IconWell>
        </ToolButton>
        {tool.sep !== undefined && <ToolSep $gap={tool.sep} />}
      </div>
    ))}
  </ToolColumn>
);

/* ---------- table ---------- */

const toneFor = (q: Quote): Tone => {
  if (q.dim) return 'gray';
  return q.pct.startsWith('-') ? 'red' : 'blue';
};

const QuoteRow = ({ q }: { q: Quote }) => {
  const dimTone: Tone = q.dim ? 'gray' : undefined;
  return (
    <DataRow $selected={q.selected}>
      <Cell $tone={toneFor(q)}>{q.pct}</Cell>
      <Cell $tone={toneFor(q)}>{q.diff}</Cell>
      <Cell $tone={q.lastTone ?? dimTone}>{q.last}</Cell>
      <Cell $left $link>{q.name}</Cell>
      <Cell $tone={q.volTone ?? dimTone}>{q.vol}</Cell>
      <Cell $tone={dimTone}>{q.low}</Cell>
      <Cell $tone={dimTone}>{q.high}</Cell>
      <Cell $tone={dimTone}>{q.bid}</Cell>
      <Cell $tone={dimTone}>{q.ask}</Cell>
      <Cell $left $faint={q.dim}>{q.time}</Cell>
      <Cell $left $faint={q.dim}>{q.date}</Cell>
      {q.stats.map((v, i) => (
        <Cell key={i}>{v}</Cell>
      ))}
    </DataRow>
  );
};

const Glyph = ({ d, color, width = 1.6 }: { d: string; color: string; width?: number }) => (
  <svg width={11} height={11} viewBox="0 0 11 11">
    <path d={d} fill="none" stroke={color} strokeWidth={width} />
  </svg>
);

const App = () => (
  <Page>
    <GlobalStyle />
    <Sidebar>
      <ToolList tools={LEFT_TOOLS} height={602} />
      <ToolList tools={RIGHT_TOOLS} height={533} />
    </Sidebar>
    <Main>
      <TitleBar>
        <WindowTitle>Predictive Average (7)</WindowTitle>
        <WindowControls>
          <LightButton><Glyph d="M2 8.5h7" color="#222" width={2} /></LightButton>
          <LightButton><Glyph d="M2 2l7 7M9 2l-7 7" color="#111" width={2.2} /></LightButton>
        </WindowControls>
      </TitleBar>

      <TableFrame>
        <Rows>
          <HeaderRow>
            {HEADERS.map(([label, off]) => (
              <HeaderCell key={label} $off={off}>
                {label}
                {label === 'Namn' && (
                  <SortMark width={9} height={8} viewBox="0 0 9 8">
                    <path d="M4.5 1L8 7H1z" fill="none" stroke="#cfcac3" />
                  </SortMark>
                )}
              </HeaderCell>
            ))}
          </HeaderRow>
          {QUOTES.map((q) => (
            <QuoteRow key={q.name} q={q} />
          ))}
          <StubRow>
            {HEADERS.map(([label]) => (
              <Cell key={label} />
            ))}
          </StubRow>
          <Ring $left={694} $top={177} $width={263} />
          <Ring $left={1022} $top={179} $width={258} />
        </Rows>
        <ScrollBar>
          <ScrollArrow><svg width={9} height={6} viewBox="0 0 9 6"><path d="M4.5 0L9 6H0z" fill="#111" /></svg></ScrollArrow>
          <ScrollThumb />
          <ScrollArrow><svg width={9} height={6} viewBox="0 0 9 6"><path d="M4.5 6L9 0H0z" fill="#111" /></svg></ScrollArrow>
        </ScrollBar>
      </TableFrame>
      <TableFoot />

      <DarkBar>
        <WindowTitle $dark>OMXS30 ( 1 630,62/5,84/0,36% )</WindowTitle>
        <WindowControls>
          <DarkButton><Glyph d="M2 8.5h7" color="#ddd" width={2} /></DarkButton>
          <DarkButton><Glyph d="M2 2.5h7v6.5h-7z" color="#ddd" /></DarkButton>
          <DarkButton><Glyph d="M2 2l7 7M9 2l-7 7" color="#ddd" width={2} /></DarkButton>
        </WindowControls>
      </DarkBar>

      <ChartBody>
        <PricePane>
          <PriceChart />
        </PricePane>
        <DateRow>
          <span>2017-01-23</span>
          <Callout>Ökad volatilitet ger fallande V.A.P-poäng</Callout>
          <span>2018-01-22</span>
        </DateRow>
        <VolumePane>
          <VolumeChart />
        </VolumePane>
      </ChartBody>
    </Main>
  </Page>
);

export default App;
